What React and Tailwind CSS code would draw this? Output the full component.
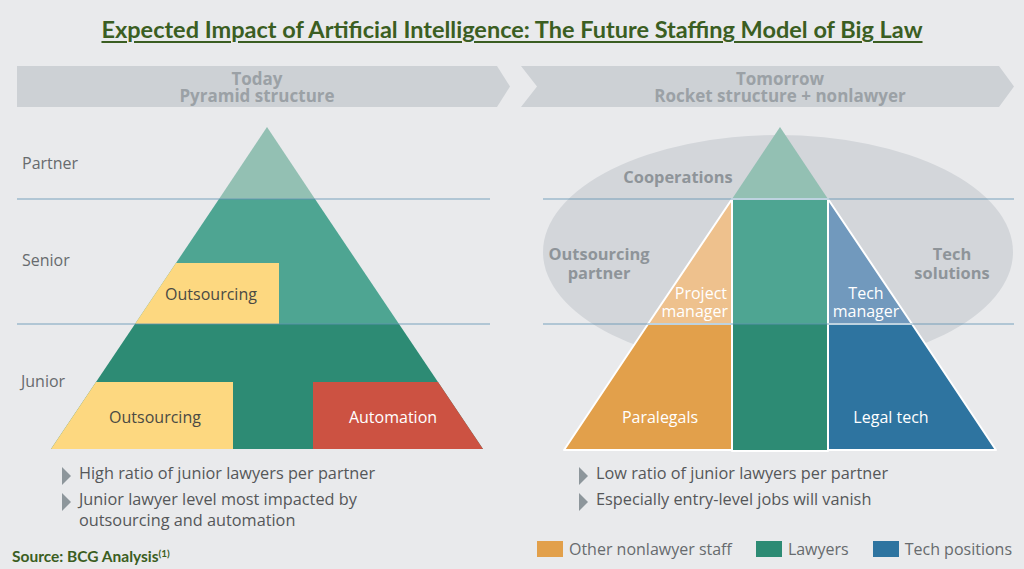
const sans = { fontFamily: '"Open Sans", "Liberation Sans", sans-serif' };
const lato = { fontFamily: 'Lato, "Liberation Sans", sans-serif' };

function Bullet({ children }) {
  return (
    <li className="flex items-start gap-[8px]">
      <svg width="9" height="18" viewBox="0 0 9 18" className="mt-[4px] shrink-0">
        <polygon points="0,0 9,9 0,18" fill="#8d969b" />
      </svg>
      <span>{children}</span>
    </li>
  );
}

function TodayDiagram() {
  return (
    <svg viewBox="17 115 493 340" width="493" height="340" className="block" style={sans}>
      <polygon points="267,127 219,199 315,199" fill="#93c0b3" />
      <polygon points="219,199 315,199 399,324 135,324" fill="#4ea592" />
      <polygon points="135,324 399,324 483,449 51,449" fill="#2d8b74" />
      <polygon points="176,263 279,263 279,324 135,324" fill="#fdd880" />
      <polygon points="96,382 233,382 233,449 51,449" fill="#fdd880" />
      <polygon points="313,382 438,382 483,449 313,449" fill="#cc5242" />
      <line x1="17" y1="199" x2="490" y2="199" stroke="#5f92b3" strokeWidth="1" opacity="0.8" />
      <line x1="17" y1="324" x2="490" y2="324" stroke="#5f92b3" strokeWidth="1" opacity="0.8" />
      <g fontSize="16" fill="#676b6e" dominantBaseline="middle">
        <text x="22" y="165">Partner</text>
        <text x="22" y="262">Senior</text>
        <text x="21" y="383">Junior</text>
      </g>
      <g fontSize="16" textAnchor="middle" dominantBaseline="middle">
        <text x="211" y="296" fill="#4a4a44">Outsourcing</text>
        <text x="155" y="419" fill="#4a4a44">Outsourcing</text>
        <text x="393" y="419" fill="#ffffff">Automation</text>
      </g>
    </svg>
  );
}

function TomorrowDiagram() {
  return (
    <svg viewBox="521 115 493 340" width="493" height="340" className="block" style={sans}>
      <ellipse cx="778" cy="252" rx="235" ry="117" fill="#d3d6da" />
      <polygon points="780,127 732,199 828,199" fill="#93c0b3" />
      <g stroke="#ffffff" strokeWidth="2" strokeLinejoin="round">
        <polygon points="732,199 732,324 648,324" fill="#eec18d" />
        <polygon points="648,324 732,324 732,450 564,450" fill="#e2a04b" />
        <polygon points="828,199 912,324 828,324" fill="#7199bd" />
        <polygon points="828,324 912,324 996,450 828,450" fill="#2e74a0" />
        <rect x="732" y="199" width="96" height="125" fill="#4ea592" />
        <rect x="732" y="324" width="96" height="127" fill="#2d8b74" />
      </g>
      <rect x="733" y="200" width="94" height="124" fill="#4ea592" />
      <rect x="733" y="324" width="94" height="126" fill="#2d8b74" />
      <line x1="543" y1="199" x2="1016" y2="199" stroke="#5f92b3" strokeWidth="1" opacity="0.8" />
      <line x1="543" y1="324" x2="1016" y2="324" stroke="#5f92b3" strokeWidth="1" opacity="0.8" />
      <g fontSize="16.4" fontWeight="700" fill="#8e9499" textAnchor="middle" dominantBaseline="middle">
        <text x="678" y="179">Cooperations</text>
        <text x="599" y="256">Outsourcing</text>
        <text x="599" y="275">partner</text>
        <text x="952" y="256">Tech</text>
        <text x="952" y="275">solutions</text>
      </g>
      <g fontSize="16" fill="#ffffff" dominantBaseline="middle">
        <text x="727" y="295" textAnchor="end">Project</text>
        <text x="728" y="313" textAnchor="end">manager</text>
        <text x="866" y="295" textAnchor="middle">Tech</text>
        <text x="866" y="313" textAnchor="middle">manager</text>
        <text x="660" y="419" textAnchor="middle">Paralegals</text>
        <text x="891" y="419" textAnchor="middle">Legal tech</text>
      </g>
    </svg>
  );
}

function Legend({ color, label }) {
  return (
    <div className="flex items-center gap-[6px]">
      <span className={`block w-[26px] h-[16px] ${color}`} />
      <span>{label}</span>
    </div>
  );
}

export default function App() {
  return (
    <div className="w-[1024px] h-[569px] bg-[#e9eaec] overflow-hidden flex flex-col" style={sans}>
      <h1
        className="text-center pt-[15px] text-[23.5px] leading-[28px] font-bold text-[#3b5e22] underline decoration-2 underline-offset-[3px]"
        style={lato}
      >
        Expected Impact of Artificial Intelligence: The Future Staffing Model of Big Law
      </h1>

      <div className="flex gap-[11px] px-[17px] mt-[23px]">
        <div className="w-[493px] flex flex-col">
          <div className="h-[41px] bg-[#cdd1d5] flex flex-col items-center justify-center pr-[13px] text-[17px] leading-[17px] font-bold text-[#9ba1a6] [clip-path:polygon(0_0,calc(100%_-_13px)_0,100%_50%,calc(100%_-_13px)_100%,0_100%)]">
            <span>Today</span>
            <span>Pyramid structure</span>
          </div>
          <div className="mt-[8px]">
            <TodayDiagram />
          </div>
          <ul className="mt-[8px] pl-[45px] flex flex-col gap-[4px] text-[16.3px] leading-[21px] text-[#555759]">
            <Bullet>High ratio of junior lawyers per partner</Bullet>
            <Bullet>
              Junior lawyer level most impacted by
              <br />
              outsourcing and automation
            </Bullet>
          </ul>
        </div>

        <div className="w-[493px] flex flex-col">
          <div className="h-[41px] bg-[#cdd1d5] flex flex-col items-center justify-center pl-[25px] text-[17px] leading-[17px] font-bold text-[#9ba1a6] [clip-path:polygon(0_0,calc(100%_-_15px)_0,100%_50%,calc(100%_-_15px)_100%,0_100%,16px_50%)]">
            <span>Tomorrow</span>
            <span>Rocket structure + nonlawyer</span>
          </div>
          <div className="mt-[8px]">
            <TomorrowDiagram />
          </div>
          <ul className="mt-[8px] pl-[58px] flex flex-col gap-[4px] text-[16.3px] leading-[21px] text-[#555759]">
            <Bullet>Low ratio of junior lawyers per partner</Bullet>
            <Bullet>Especially entry-level jobs will vanish</Bullet>
          </ul>
        </div>
      </div>

      <div className="mt-auto flex items-end justify-between pl-[12px] pr-[12px] pb-[4px]">
        <div className="text-[15.5px] leading-[17px] font-bold text-[#3b5e22]" style={lato}>
          Source: BCG Analysis<sup className="text-[10px]">(1)</sup>
        </div>
        <div className="flex items-center gap-[24px] mb-[6px] text-[16px] leading-[20px] text-[#676b6e]">
          <Legend color="bg-[#e2a04b]" label="Other nonlawyer staff" />
          <Legend color="bg-[#2d8b74]" label="Lawyers" />
          <Legend color="bg-[#2e74a0]" label="Tech positions" />
        </div>
      </div>
    </div>
  );
}
